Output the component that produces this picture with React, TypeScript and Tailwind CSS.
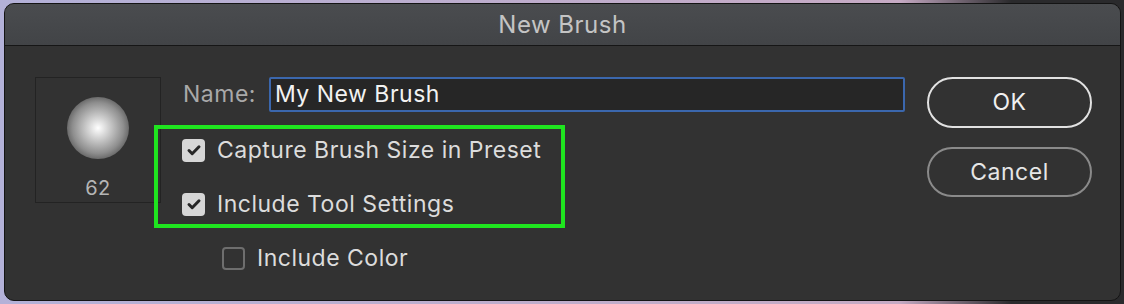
import React from 'react';

const font = { fontFamily: 'Inter, "Noto Sans", "Liberation Sans", sans-serif' };

const Check = ({ checked }: { checked: boolean }) =>
    checked ? (
        <div className="w-[23px] h-[23px] rounded-[4px] bg-[#d6d6d6] flex items-center justify-center shrink-0">
            <svg width="16" height="16" viewBox="0 0 16 16" fill="none">
                <path d="M3 8.5l3.2 3.2L13 4.8" stroke="#262626" strokeWidth={3} strokeLinecap="round" strokeLinejoin="round" />
            </svg>
        </div>
    ) : (
        <div className="w-[23px] h-[23px] rounded-[4px] border-2 border-[#6e6e6e] shrink-0" />
    );

const Option = ({ label, checked }: { label: string; checked: boolean }) => (
    <div className="h-[30px] flex items-center gap-[12px]">
        <Check checked={checked} />
        <span className="text-[23px] tracking-[0.5px] text-[#dcdcdc] leading-none">{label}</span>
    </div>
);

export default function App() {
    return (
        <div
            className="w-[1124px] h-[304px] overflow-hidden bg-[linear-gradient(90deg,#b3b1d8,#c6aac4_80%,#2a2a2c_90%)] pt-[3px] pl-[4px]"
            style={font}
        >
            {/* Dialog */}
            <div className="w-[1117px] h-[298px] rounded-[10px] border border-[#141414] bg-[#323232] overflow-hidden flex flex-col">
                {/* Title bar */}
                <div className="h-[42px] shrink-0 bg-[linear-gradient(180deg,#4a4c4f,#424447)] border-b border-[#161616] flex items-center justify-center">
                    <span className="text-[24px] tracking-[0.5px] text-[#c4c4c4]">New Brush</span>
                </div>

                {/* Body */}
                <div className="flex pt-[31px] pl-[30px]">
                    {/* Preview */}
                    <div className="w-[126px] h-[126px] shrink-0 border border-[#232323] flex flex-col items-center">
                        <div className="mt-[19px] w-[62px] h-[62px] rounded-full bg-[radial-gradient(circle,#ffffff_0%,#d4d4d4_22%,#8e8e8e_58%,#444444_85%,#323232_100%)]" />
                        <span className="mt-[19px] text-[20px] tracking-[0.5px] text-[#b5b5b5] leading-none">62</span>
                    </div>

                    {/* Middle */}
                    <div className="ml-[-7px] w-[751px] flex flex-col">
                        <div className="h-[35px] flex items-center pl-[29px] gap-[13px]">
                            <span className="text-[23px] tracking-[0.5px] text-[#a9a9a9]">Name:</span>
                            <div className="flex-1 h-[35px] border-2 border-[#3b67ad] bg-[#262626] rounded-[2px] flex items-center pl-[4px]">
                                <span className="text-[23px] tracking-[0.5px] text-[#f2f2f2]">My New Brush</span>
                            </div>
                        </div>

                        <div className="mt-[13px] w-[411px] h-[103px] border-4 border-[#1fe51f] pl-[24px] pt-[6px] flex flex-col gap-[24px]">
                            <Option label="Capture Brush Size in Preset" checked />
                            <Option label="Include Tool Settings" checked />
                        </div>

                        <div className="mt-[15px] ml-[68px]">
                            <Option label="Include Color" checked={false} />
                        </div>
                    </div>

                    {/* Buttons */}
                    <div className="ml-[22px] flex flex-col gap-[19px]">
                        <button className="w-[165px] h-[51px] rounded-full border-2 border-[#e2e2e2] text-[23px] tracking-[0.5px] text-[#f0f0f0]">
                            OK
                        </button>
                        <button className="w-[165px] h-[50px] rounded-full border-2 border-[#8a8a8a] text-[23px] tracking-[0.5px] text-[#e6e6e6]">
                            Cancel
                        </button>
                    </div>
                </div>
            </div>
        </div>
    );
}
